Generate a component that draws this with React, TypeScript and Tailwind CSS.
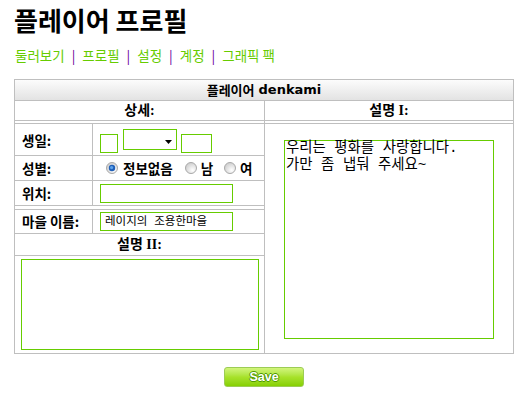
import React from "react";

const Radio = ({ checked }: { checked?: boolean }) => (
  <svg width="12" height="12" viewBox="0 0 12 12" className="shrink-0">
    <defs>
      <radialGradient id={checked ? "rg1" : "rg0"} cx="0.65" cy="0.7" r="0.7">
        <stop offset="0" stopColor="#ffffff" />
        <stop offset="1" stopColor="#cfcfcf" />
      </radialGradient>
    </defs>
    <circle cx="6" cy="6" r="5.5" fill={`url(#${checked ? "rg1" : "rg0"})`} stroke="#a9a9a9" />
    {checked && (
      <>
        <circle cx="6" cy="6" r="3.2" fill="#1f5fb8" />
        <circle cx="5.6" cy="5.6" r="1.6" fill="#5ea4ec" />
      </>
    )}
  </svg>
);

export default function App() {
  const links = ["둘러보기", "프로필", "설정", "계정", "그래픽 팩"];
  return (
    <div className="w-[525px] h-[396px] bg-white text-black font-['Noto_Sans_CJK_KR',sans-serif] overflow-hidden">
      <h1 className="ml-[14px] pt-[7px] text-[26px] leading-[26px] font-bold">플레이어 프로필</h1>
      <nav className="ml-[15px] mt-[14px] flex items-center text-[13.5px] leading-[16px]">
        {links.map((l, i) => (
          <React.Fragment key={l}>
            {i > 0 && <span className="mx-[7px] text-[#660099]">|</span>}
            <span className="text-[#66cc00]">{l}</span>
          </React.Fragment>
        ))}
      </nav>

      <div className="ml-[14px] mt-[16px] w-[500px] border border-[#bfbfbf]">
        <div className="h-[21px] border-b border-[#bfbfbf] bg-linear-to-b from-[#fcfcfc] to-[#e3e3e3] flex items-center justify-center text-[13px] font-bold">
          <span>플레이어</span>
          <span className="font-['DejaVu_Sans',sans-serif] ml-[4px]">denkami</span>
        </div>
        <div className="flex">
          {/* left column */}
          <div className="w-[250px] border-r border-[#bfbfbf]">
            <div className="h-[20px] border-b border-[#bfbfbf] flex items-center justify-center text-[14px] font-bold font-['Liberation_Serif','Noto_Sans_CJK_KR',serif]">
              상세:
            </div>
            <div className="mt-[2px] border-t border-[#bfbfbf]">
              <div className="flex h-[32px] border-b border-[#bfbfbf]">
                <div className="w-[78px] border-r border-[#bfbfbf] pl-[7px] pt-[2px] flex items-center text-[13.5px] font-bold">생일:</div>
                <div className="flex items-start pl-[7px]">
                  <div className="mt-[10px] w-[18px] h-[19px] border border-[#66cc00]" />
                  <div className="mt-[5px] ml-[5px] w-[54px] h-[21px] border border-[#66cc00] relative">
                    <svg width="7" height="4" viewBox="0 0 7 4" className="absolute right-[4px] top-[10px]">
                      <path d="M0 0H7L3.5 4Z" fill="#000" />
                    </svg>
                  </div>
                  <div className="mt-[10px] ml-[4px] w-[31px] h-[19px] border border-[#66cc00]" />
                </div>
              </div>
              <div className="flex h-[25px] border-b border-[#bfbfbf]">
                <div className="w-[78px] border-r border-[#bfbfbf] pl-[7px] flex items-center text-[13.5px] font-bold">성별:</div>
                <div className="flex items-center pl-[13px] text-[13.5px] font-bold">
                  <Radio checked />
                  <span className="ml-[5px]">정보없음</span>
                  <span className="ml-[12px]"><Radio /></span>
                  <span className="ml-[4px]">남</span>
                  <span className="ml-[11px]"><Radio /></span>
                  <span className="ml-[4px]">여</span>
                </div>
              </div>
              <div className="flex h-[25px] border-b border-[#bfbfbf]">
                <div className="w-[78px] border-r border-[#bfbfbf] pl-[7px] flex items-center text-[13.5px] font-bold">위치:</div>
                <div className="flex items-center pl-[7px]">
                  <div className="w-[133px] h-[19px] border border-[#66cc00]" />
                </div>
              </div>
              <div className="mt-[3px] border-t border-[#bfbfbf]">
                <div className="flex h-[24px] border-b border-[#bfbfbf]">
                  <div className="w-[78px] border-r border-[#bfbfbf] pl-[7px] flex items-center text-[13.5px] font-bold whitespace-nowrap">마을 이름:</div>
                  <div className="flex items-center pl-[7px]">
                    <div className="w-[133px] h-[19px] border border-[#66cc00] pl-[4px] flex items-center whitespace-pre text-[11.5px] leading-[13px] font-['Liberation_Mono','Noto_Sans_CJK_KR',monospace]">
                      레이지의 조용한마을
                    </div>
                  </div>
                </div>
                <div className="h-[22px] border-b border-[#bfbfbf] flex items-center justify-center text-[14px] font-bold font-['Liberation_Serif','Noto_Sans_CJK_KR',serif]">
                  설명 II:
                </div>
                <div className="pl-[6px] pt-[3px] pb-[3px]">
                  <div className="w-[238px] h-[91px] border border-[#66cc00]" />
                </div>
              </div>
            </div>
          </div>
          {/* right column */}
          <div className="flex-1">
            <div className="h-[20px] border-b border-[#bfbfbf] flex items-center justify-center text-[14px] font-bold font-['Liberation_Serif','Noto_Sans_CJK_KR',serif]">
              설명 I:
            </div>
            <div className="mt-[2px] border-t border-[#bfbfbf] pl-[19px] pt-[16px]">
              <div className="w-[210px] h-[199px] border border-[#66cc00] px-[1px]">
                <div className="relative -top-[1px] whitespace-pre text-[14.4px] leading-[17px] font-['Liberation_Mono','Noto_Sans_CJK_KR',monospace] text-black">
                  {"우리는 평화를 사랑합니다.\n가만 좀 냅둬 주세요~"}
                </div>
              </div>
            </div>
          </div>
        </div>
      </div>

      <div className="ml-[14px] w-[500px] mt-[13px] flex justify-center">
        <div className="w-[80px] h-[20px] rounded-[3px] border border-[#9ccc55] bg-linear-to-b from-[#d2f57a] via-[#a8e22a] to-[#86d000] flex items-center justify-center">
          <span className="text-[12.5px] leading-[14px] font-bold font-['Liberation_Sans',sans-serif] text-white [text-shadow:1px_0_0_#4f9a00,-1px_0_0_#4f9a00,0_1px_0_#4f9a00,0_-1px_0_#4f9a00]">
            Save
          </span>
        </div>
      </div>
    </div>
  );
}
